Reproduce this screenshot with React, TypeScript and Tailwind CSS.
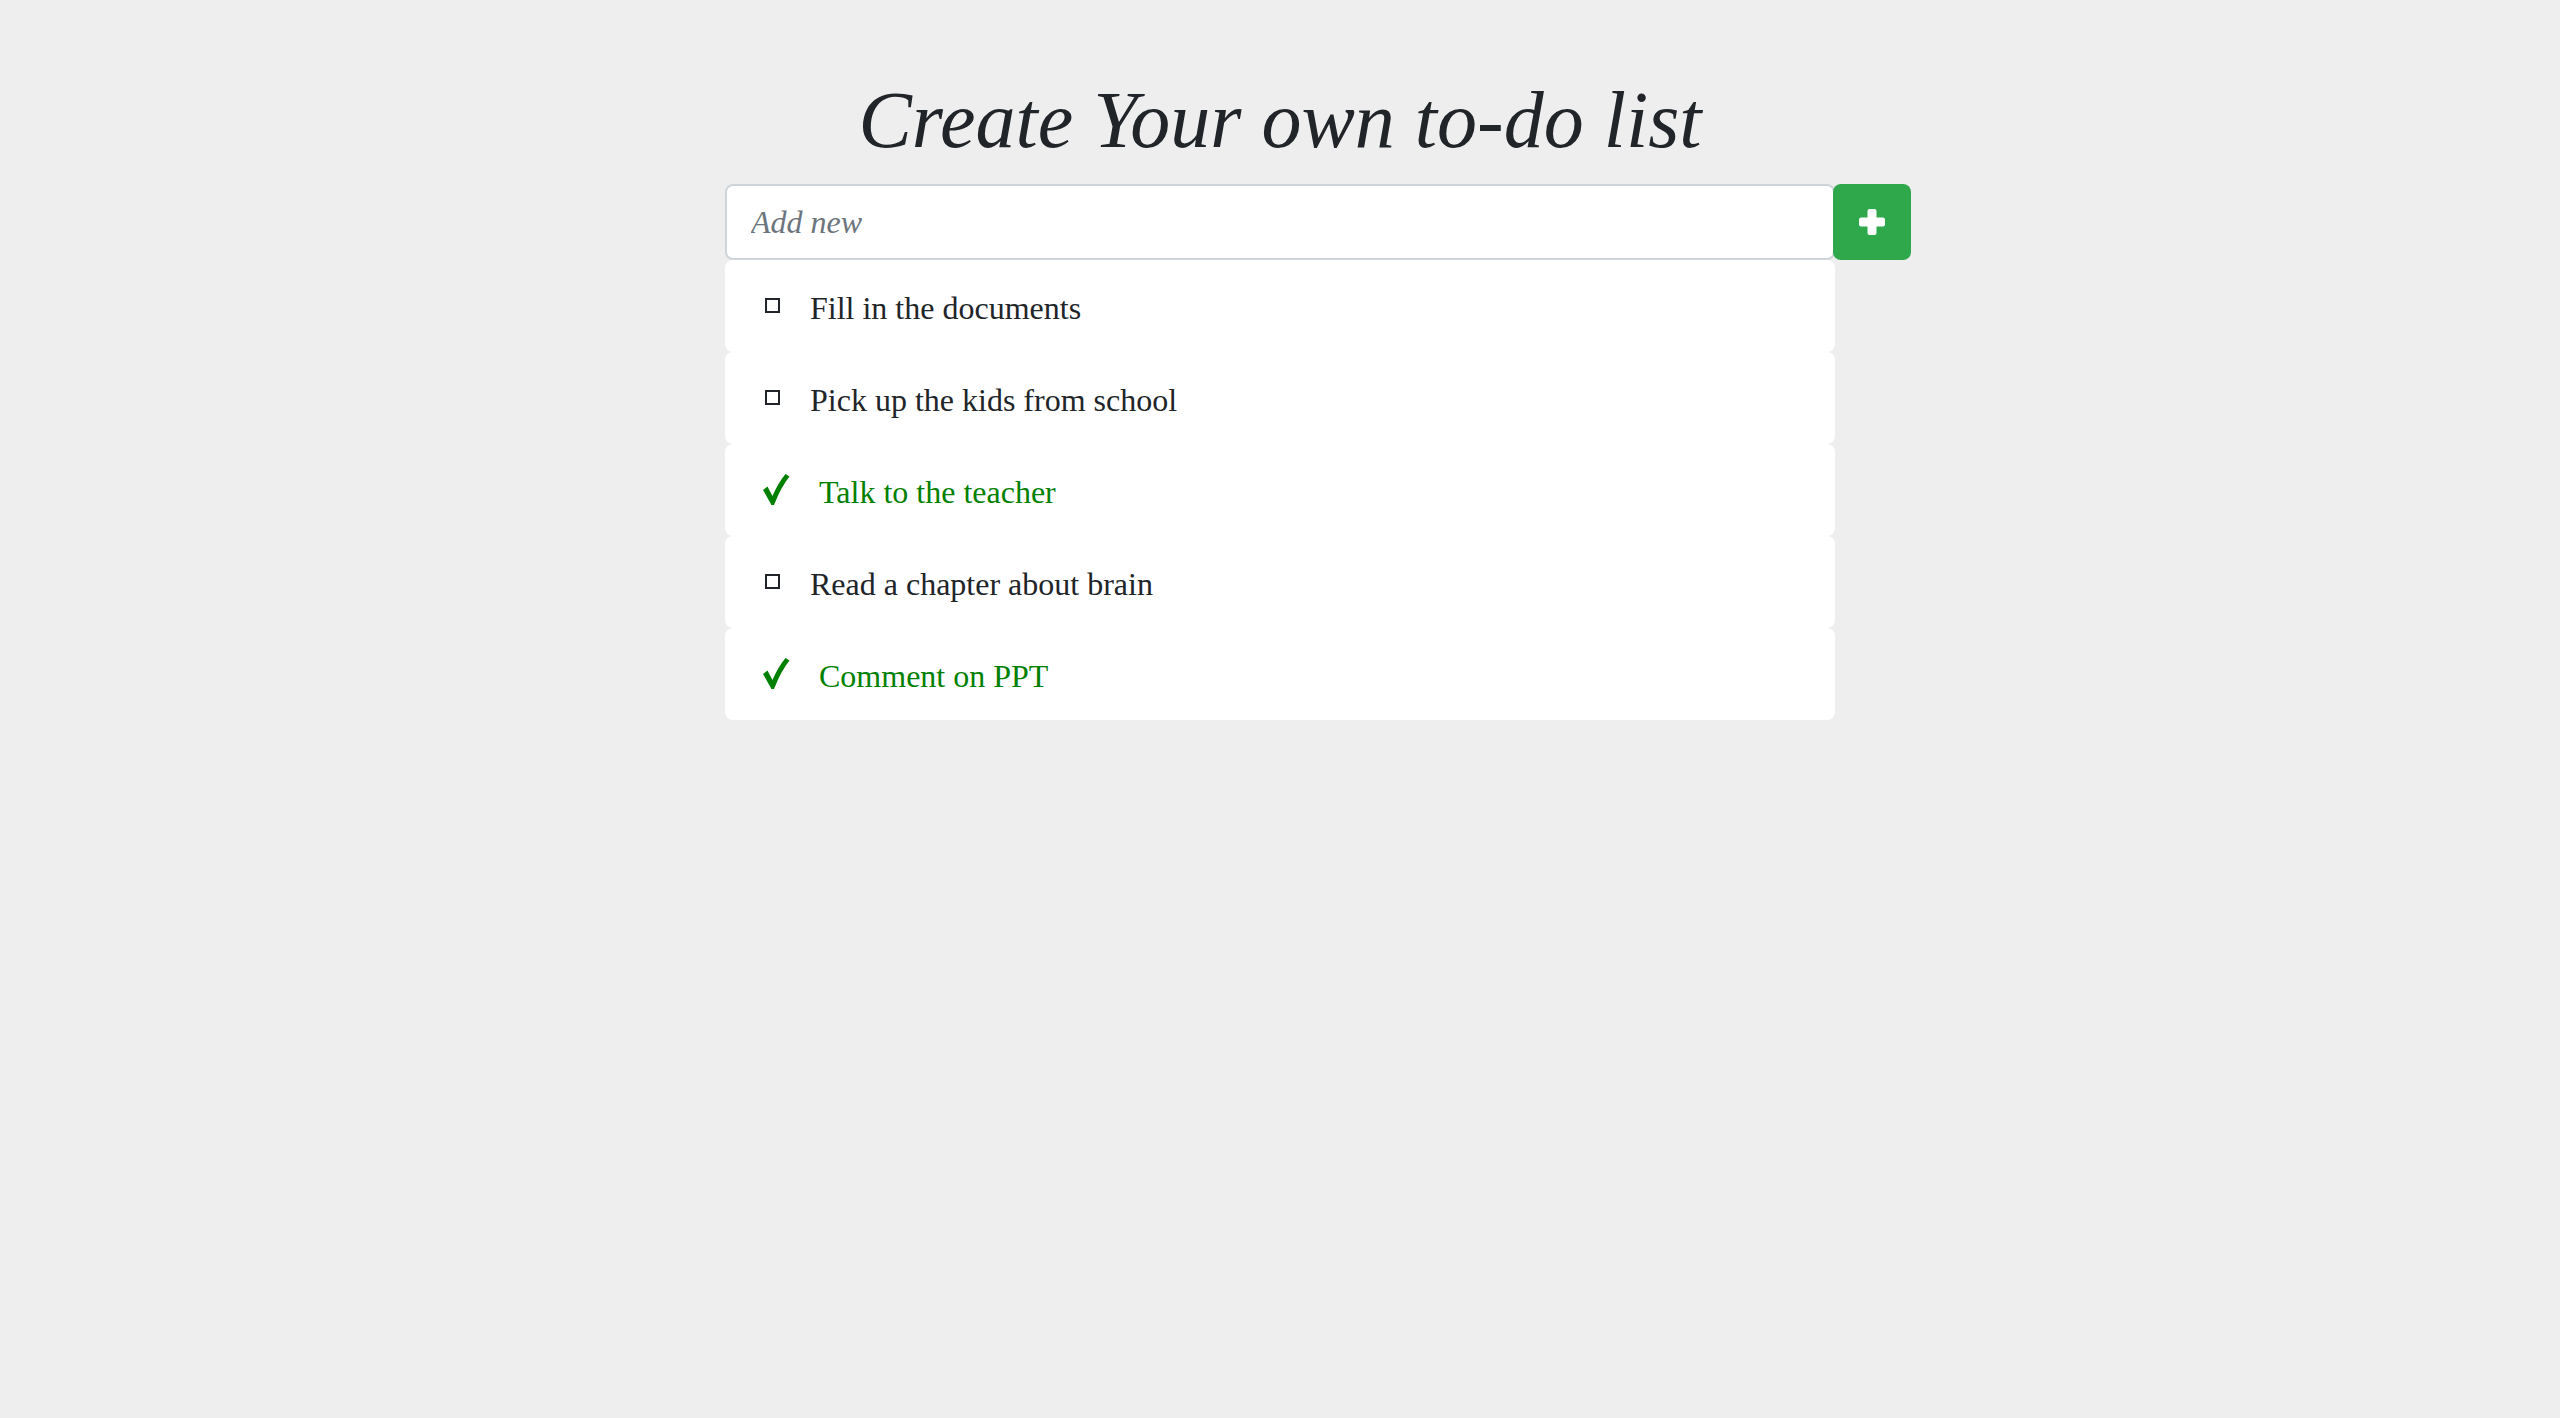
import React from 'react';

const todos = [
  { text: 'Fill in the documents', done: false },
  { text: 'Pick up the kids from school', done: false },
  { text: 'Talk to the teacher', done: true },
  { text: 'Read a chapter about brain', done: false },
  { text: 'Comment on PPT', done: true },
];

const CheckMark = () => (
  <svg width="27" height="31" viewBox="0 0 27 31" className="shrink-0 -mt-[4px]">
    <path d="M0 16 L4.5 12.5 L9.5 22 Q15 9 22.5 0 L26.5 2.5 Q18 13 11 31 L8.5 31 Z" fill="#008000" />
  </svg>
);

const PlusIcon = () => (
  <svg width="26" height="26" viewBox="0 0 26 26">
    <rect x="0" y="8.5" width="26" height="9" rx="2" fill="#ffffff" />
    <rect x="8.5" y="0" width="9" height="26" rx="2" fill="#ffffff" />
  </svg>
);

const App = () => {
  return (
    <div className="min-h-screen bg-[#eeeeee] pt-[72px]" style={{ fontFamily: '"Liberation Serif", "Times New Roman", serif' }}>
      <h1 className="text-center italic text-[80px] leading-[96px] text-[#212529] mb-[16px]">
        Create Your own to-do list
      </h1>

      <div className="w-[1110px] mx-auto">
        {/* input + add button, the button hangs past the list's right edge */}
        <div className="flex">
          <input
            type="text"
            placeholder="Add new"
            className="w-[1110px] shrink-0 h-[76px] bg-white border-2 border-[#ced4da] rounded-[8px] pl-[24px] text-[32px] italic text-[#495057] placeholder:text-[#6c757d] outline-none"
          />
          <button className="shrink-0 w-[78px] h-[76px] -ml-[2px] bg-[#2ea84b] rounded-[8px] flex items-center justify-center">
            <PlusIcon />
          </button>
        </div>

        <ul>
          {todos.map((todo, index) => (
            <li key={index} className="h-[92px] bg-white rounded-[8px] pl-[38px] pt-[3px] flex items-center text-[32px] leading-[44px]">
              {todo.done ? (
                <>
                  <CheckMark />
                  <span className="ml-[29px] text-[#008000]">{todo.text}</span>
                </>
              ) : (
                <>
                  <span className="ml-[2px] w-[15px] h-[15px] border-2 border-[#212529] shrink-0 -mt-[4px]"></span>
                  <span className="ml-[30px] text-[#212529]">{todo.text}</span>
                </>
              )}
            </li>
          ))}
        </ul>
      </div>
    </div>
  );
};

export default App;
